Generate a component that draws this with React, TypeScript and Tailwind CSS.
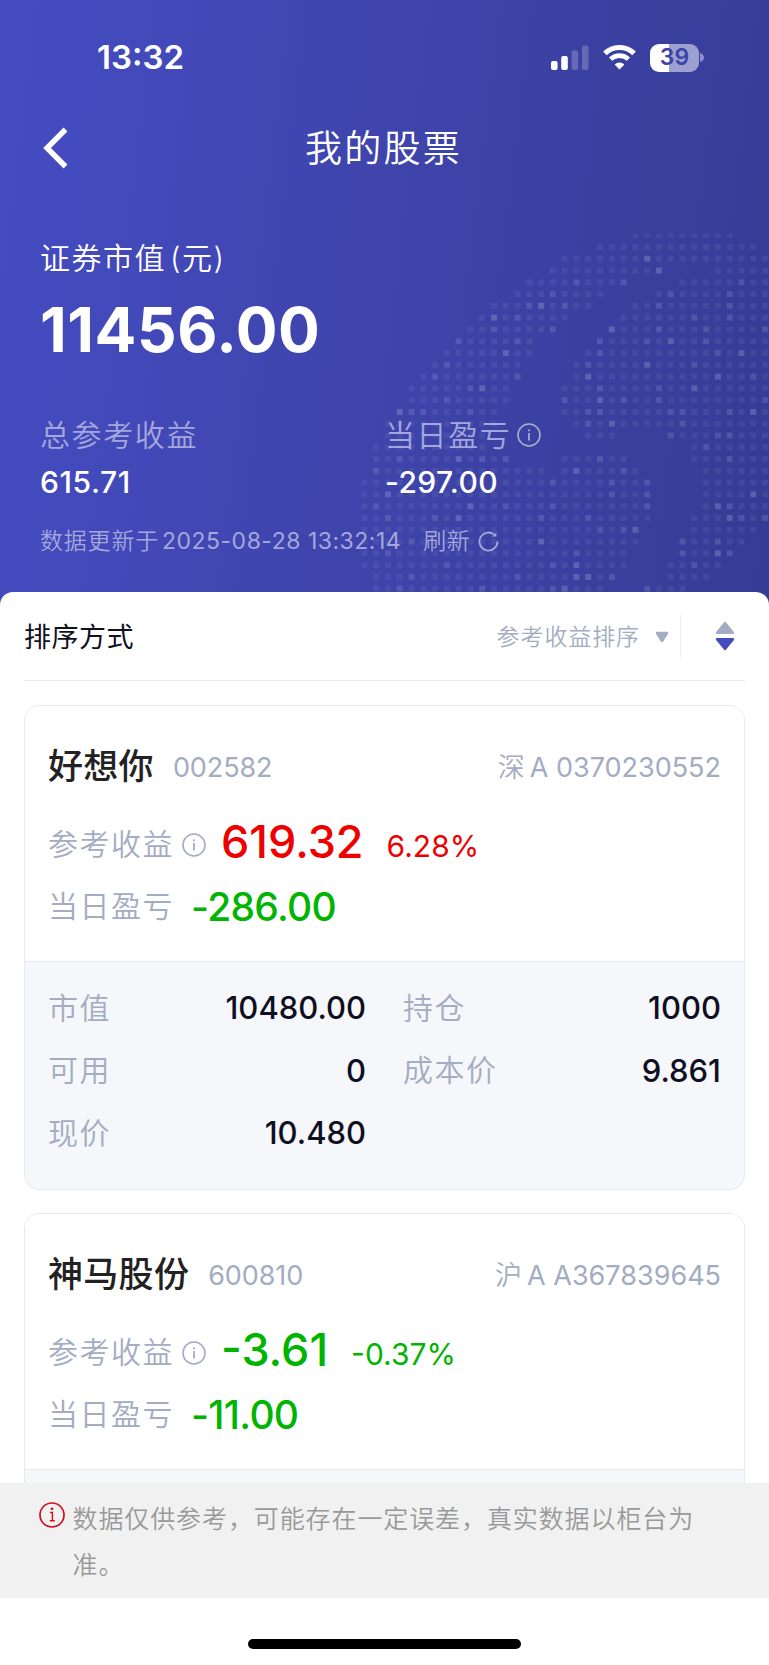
interface DotRow {
  runs: number[][];
  mid?: number[];
  high?: number[];
}

interface Stock {
  name: string;
  code: string;
  market: string;
  account: string;
  profit: string;
  percent: string;
  daily: string;
  up: boolean;
  details: { label: string; value: string }[];
}

const PITCH = 11.785;

// Each row lists the lit column ranges, then the brighter squares in it
const dotRows: DotRow[] = [
  { runs: [[23, 31]] },
  { runs: [[20, 33]] },
  { runs: [[17, 34]], high: [24] },
  { runs: [[16, 25], [30, 34]], high: [25] },
  { runs: [[14, 22], [27, 34]], mid: [18, 22, 32] },
  { runs: [[13, 20], [25, 34]], mid: [16, 26, 31] },
  { runs: [[11, 19], [23, 34]], mid: [14, 17, 25, 31], high: [15] },
  { runs: [[10, 17], [22, 34]], mid: [13, 28, 31], high: [11] },
  { runs: [[9, 16], [21, 34]], mid: [11, 16, 25, 29, 34], high: [21] },
  { runs: [[8, 14], [20, 34]], mid: [8, 13, 20, 24, 29], high: [26] },
  { runs: [[7, 14], [19, 34]], mid: [20, 30], high: [12, 32] },
  { runs: [[6, 13], [18, 34]], mid: [7, 19, 28], high: [24] },
  { runs: [[5, 13], [18, 34]], mid: [6, 13, 33], high: [19, 30] },
  { runs: [[4, 12], [17, 34]], mid: [9, 20, 25], high: [10, 28] },
  { runs: [[4, 12], [17, 34]], mid: [7, 17, 22, 25, 34], high: [20] },
  { runs: [[3, 11], [17, 34]], mid: [4, 5, 9, 19, 20, 26, 27, 31], high: [3, 33] },
  { runs: [[2, 11], [18, 34]], mid: [19, 27], high: [21] },
  { runs: [[2, 10], [19, 21], [26, 34]], mid: [26, 30, 31] },
  { runs: [[1, 10], [28, 34]], mid: [29] },
  { runs: [[1, 12], [17, 22], [28, 34]], mid: [3, 10, 12, 20, 31], high: [8] },
  { runs: [[1, 15], [17, 23], [29, 34]], mid: [1, 22], high: [18] },
  { runs: [[0, 24], [29, 34]], mid: [16, 21, 24] },
  { runs: [[0, 24], [29, 34]], mid: [21, 24], high: [2, 33] },
  { runs: [[0, 24], [29, 34]], mid: [1, 12, 16, 24, 31], high: [9, 30] },
  { runs: [[0, 24], [28, 34]], mid: [2, 6, 15, 19, 32, 34], high: [8, 31] },
  { runs: [[0, 23], [28, 33]], mid: [20, 22], high: [23] },
  { runs: [[0, 23], [27, 32]], mid: [4, 27, 30], high: [15] },
  { runs: [[0, 22], [27, 31]], mid: [2, 18, 27, 31], high: [30] },
  { runs: [[0, 22], [26, 30]], mid: [7, 16, 28], high: [18] },
  { runs: [[1, 21], [26, 29]], mid: [4, 13, 21], high: [18, 19] },
  { runs: [[1, 20], [24, 27]], mid: [3, 10, 16, 24], high: [17] },
];

const stocks: Stock[] = [
  {
    name: '好想你',
    code: '002582',
    market: '深',
    account: 'A 0370230552',
    profit: '619.32',
    percent: '6.28%',
    daily: '-286.00',
    up: true,
    details: [
      { label: '市值', value: '10480.00' },
      { label: '持仓', value: '1000' },
      { label: '可用', value: '0' },
      { label: '成本价', value: '9.861' },
      { label: '现价', value: '10.480' },
    ],
  },
  {
    name: '神马股份',
    code: '600810',
    market: '沪',
    account: 'A A367839645',
    profit: '-3.61',
    percent: '-0.37%',
    daily: '-11.00',
    up: false,
    details: [],
  },
];

function dotOpacity(row: DotRow, col: number) {
  if (row.high?.includes(col)) return 0.18;
  if (row.mid?.includes(col)) return 0.12;
  return 0.06;
}

function DotPattern() {
  return (
    <svg className="absolute top-[229px] left-[360px]" width="409" height="364" viewBox="0 0 409 364" fill="#fff">
      {dotRows.map((row, r) =>
        row.runs.flatMap(([from, to]) =>
          Array.from({ length: to - from + 1 }, (_, i) => {
            const col = from + i;
            return (
              <rect
                key={`${r}-${col}`}
                x={1.4 + col * PITCH}
                y={r === 0 ? 4.7 : 3.2 + r * PITCH}
                width="5.9"
                height={r === 0 ? 4 : 5.9}
                fillOpacity={dotOpacity(row, col)}
              />
            );
          })
        )
      )}
    </svg>
  );
}

function StatusBar() {
  return (
    <div className="flex h-[115px] items-center justify-between pl-[97px] pr-[65px] text-white">
      <span className="text-[33px] font-semibold leading-none">13:32</span>
      <div className="flex items-center gap-[14px]">
        <svg width="38" height="26" viewBox="0 0 38 26" fill="#fff">
          <rect x="0" y="16" width="6.6" height="9" rx="2" />
          <rect x="10.2" y="11" width="6.6" height="14" rx="2" />
          <rect x="20.6" y="5.5" width="6.6" height="19.5" rx="2" fillOpacity="0.22" />
          <rect x="31" y="0.5" width="6.6" height="24.5" rx="2" fillOpacity="0.22" />
        </svg>
        <svg width="33" height="25" viewBox="0 0 33 25" fill="none" stroke="#fff">
          <path d="M1.9 8.4 A21 21 0 0 1 31.1 8.4" strokeWidth="5" />
          <path d="M7.6 14.2 A12.8 12.8 0 0 1 25.4 14.2" strokeWidth="4.6" />
          <path d="M16.5 24.6 L11.6 19.6 A7 7 0 0 1 21.4 19.6 Z" fill="#fff" stroke="none" />
        </svg>
        <div className="flex items-center gap-[1px]">
          <div className="flex h-[28px] w-[49px] items-center justify-center rounded-[9px] bg-[linear-gradient(90deg,#fff_39%,#9ea0d1_39%)] text-[23px] font-semibold leading-none text-[#3d43a7]">
            39
          </div>
          <svg width="4" height="9" viewBox="0 0 4 9">
            <path d="M0 0 Q4 1.5 4 4.5 Q4 7.5 0 9 Z" fill="#9194cb" />
          </svg>
        </div>
      </div>
    </div>
  );
}

function InfoIcon({ className }: { className: string }) {
  return (
    <svg className={className} width="24" height="24" viewBox="0 0 24 24" fill="none" stroke="currentColor">
      <circle cx="12" cy="12" r="11" strokeWidth="1.6" />
      <path d="M12 10 V17.6" strokeWidth="1.8" />
      <circle cx="12" cy="7.3" r="1.1" fill="currentColor" stroke="none" />
    </svg>
  );
}

function Header() {
  return (
    <header className="relative h-[620px] bg-[linear-gradient(97deg,#454cc2_0%,#3e44aa_52%,#363c94_100%)]">
      <DotPattern />
      <div className="relative">
        <StatusBar />
        <div className="mt-px flex h-[64px] items-center px-[42px] text-white">
          <svg width="27" height="42" viewBox="0 0 27 42" fill="none" stroke="#fff" strokeWidth="5.4">
            <path d="M23.5 2.5 L5 21 L23.5 39.5" />
          </svg>
          <h1 className="flex-1 pr-[29px] text-center text-[37px] font-[350] leading-none tracking-[2.2px]">我的股票</h1>
        </div>

        <div className="px-10 pt-[58px]">
          <div className="text-[30px] font-[350] leading-[40px] tracking-[1.5px] text-white">
            证券市值<span className="ml-1">(元)</span>
          </div>
          <div className="mt-[16px] text-[62px] font-bold leading-[72px] tracking-[0.55px] text-white">11456.00</div>
          <div className="mt-[49px] flex">
            <div className="w-[345px]">
              <div className="text-[30px] font-[350] leading-[40px] tracking-[1.6px] text-[#a4a7dc]">总参考收益</div>
              <div className="mt-[8px] text-[30px] font-medium leading-[38px] tracking-[0.6px] text-white">615.71</div>
            </div>
            <div>
              <div className="flex items-center gap-[6px] text-[30px] font-[350] leading-[40px] tracking-[1.6px] text-[#a4a7dc]">
                当日盈亏
                <InfoIcon className="text-[#a9adc8]" />
              </div>
              <div className="mt-[8px] text-[30px] font-medium leading-[38px] tracking-[0.4px] text-white">-297.00</div>
            </div>
          </div>
          <div className="mt-[23px] flex items-center text-[23px] leading-[34px] text-[#a4a7dc]">
            <span className="font-[350] tracking-[0.8px]">数据更新于</span>
            <span className="ml-[3px] tracking-[0.5px]">2025-08-28 13:32:14</span>
            <span className="ml-[22px] font-[350] tracking-[0.6px]">刷新</span>
            <svg className="ml-[8px]" width="21" height="21" viewBox="0 0 21 21" fill="none" stroke="currentColor" strokeWidth="1.8">
              <path d="M19.5 10.5 A9 9 0 1 1 16 3.4" />
              <path d="M18.4 1.4 V5.6 H13.8 Z" fill="currentColor" stroke="none" />
            </svg>
          </div>
        </div>
      </div>
    </header>
  );
}

function SortBar() {
  return (
    <div className="flex h-[89px] items-center border-b-[1.5px] border-[#e6e9f3]">
      <span className="pt-[5px] text-[27px] tracking-[0.5px] text-[#0f0f22]">排序方式</span>
      <span className="ml-auto pt-[2px] text-[23px] font-[350] tracking-[0.9px] text-[#a3acc2]">参考收益排序</span>
      <svg className="ml-[15px] mt-[2px]" width="14" height="12" viewBox="0 0 14 12">
        <path d="M2 2 H12 L7 10 Z" fill="#a3acc2" stroke="#a3acc2" strokeWidth="2.4" strokeLinejoin="round" />
      </svg>
      <div className="ml-[11px] h-[43px] w-px bg-[#eceef4]" />
      <svg className="ml-[34px] mr-[10px]" width="20" height="30" viewBox="0 0 20 30" strokeWidth="2.4" strokeLinejoin="round">
        <path d="M10 2 L18 11.8 H2 Z" fill="#a3acc2" stroke="#a3acc2" />
        <path d="M10 28 L18 18.2 H2 Z" fill="#444bc0" stroke="#444bc0" />
      </svg>
    </div>
  );
}

function StockCard({ stock }: { stock: Stock }) {
  return (
    <div className="h-[485px] overflow-hidden rounded-[15px] border-[1.5px] border-[#e6e9f1] bg-[#f5f7fb]">
      <div className="h-[256px] border-b-[1.5px] border-[#e6e9f1] bg-white px-[23px] pt-[35px]">
        <div className="flex h-[50px] items-center">
          <span className="text-[35px] font-medium leading-none tracking-[0.3px] text-[#222]">{stock.name}</span>
          <span className="ml-[19px] pt-[3px] text-[27px] leading-none tracking-[-0.1px] text-[#a3acc2]">{stock.code}</span>
          <span className="ml-auto pt-[3px] text-[27px] leading-none text-[#a3acc2]">
            <span className="font-[350]">{stock.market}</span>
            <span className="ml-[5px]">{stock.account}</span>
          </span>
        </div>
        <div className="mt-[24px] flex h-[56px] items-center">
          <span className="pt-[2px] text-[30px] font-[350] tracking-[1.5px] text-[#a3acc2]">参考收益</span>
          <InfoIcon className="ml-[8px] mt-[4px] text-[#a3acc2]" />
          <span className={`ml-[15px] pb-[4px] text-[45px] font-medium leading-none ${stock.up ? 'text-[#ee0000]' : 'text-[#00b400]'}`}>
            {stock.profit}
          </span>
          <span className={`ml-[23px] pt-[5px] text-[30px] leading-none ${stock.up ? 'text-[#ee0000]' : 'text-[#00b400]'}`}>
            {stock.percent}
          </span>
        </div>
        <div className="mt-[8px] flex h-[54px] items-center">
          <span className="text-[30px] font-[350] tracking-[1.5px] text-[#a3acc2]">当日盈亏</span>
          <span className="ml-[17px] text-[39px] font-medium leading-none tracking-[-0.7px] text-[#00b400]">{stock.daily}</span>
        </div>
      </div>
      <div className="grid grid-cols-2 gap-x-[37px] px-[23px] pt-[15px]">
        {stock.details.map((item) => (
          <div key={item.label} className="flex h-[62.5px] items-center justify-between">
            <span className="text-[30px] font-[350] tracking-[1.5px] text-[#a3acc2]">{item.label}</span>
            <span className="text-[31px] font-medium text-[#0f0f22]">{item.value}</span>
          </div>
        ))}
      </div>
    </div>
  );
}

function Footer() {
  return (
    <footer className="shrink-0">
      <div className="flex h-[115px] bg-[#f1f1f1] px-[39px] pt-[13px]">
        <svg className="mt-[6px] shrink-0" width="26" height="26" viewBox="0 0 26 26" fill="none" stroke="#d2101c">
          <circle cx="13" cy="13" r="12" strokeWidth="1.7" />
          <circle cx="13" cy="6.8" r="1.4" fill="#d2101c" stroke="none" />
          <path d="M11 10.5 H13.4 V18.8 M10.8 18.8 H15.8" strokeWidth="1.4" />
        </svg>
        <p className="ml-[7.5px] flex-1 text-[25px] font-[350] leading-[46px] tracking-[0.9px] text-[#999]">
          数据仅供参考，可能存在一定误差，真实数据以柜台为准。
        </p>
      </div>
      <div className="flex h-[67px] justify-center bg-white pt-[41px]">
        <div className="h-[10px] w-[273px] rounded-full bg-black" />
      </div>
    </footer>
  );
}

export default function App() {
  return (
    <div className="flex h-[1665px] w-[769px] flex-col overflow-hidden bg-white font-[Inter,'Noto_Sans_CJK_SC',sans-serif]">
      <div className="min-h-0 flex-1 overflow-hidden">
        <Header />
        <main className="relative -mt-[28px] rounded-t-[13px] bg-white px-6">
          <SortBar />
          <div className="flex flex-col gap-[23px] pt-[24px]">
            {stocks.map((stock) => (
              <StockCard key={stock.code} stock={stock} />
            ))}
          </div>
        </main>
      </div>
      <Footer />
    </div>
  );
}
